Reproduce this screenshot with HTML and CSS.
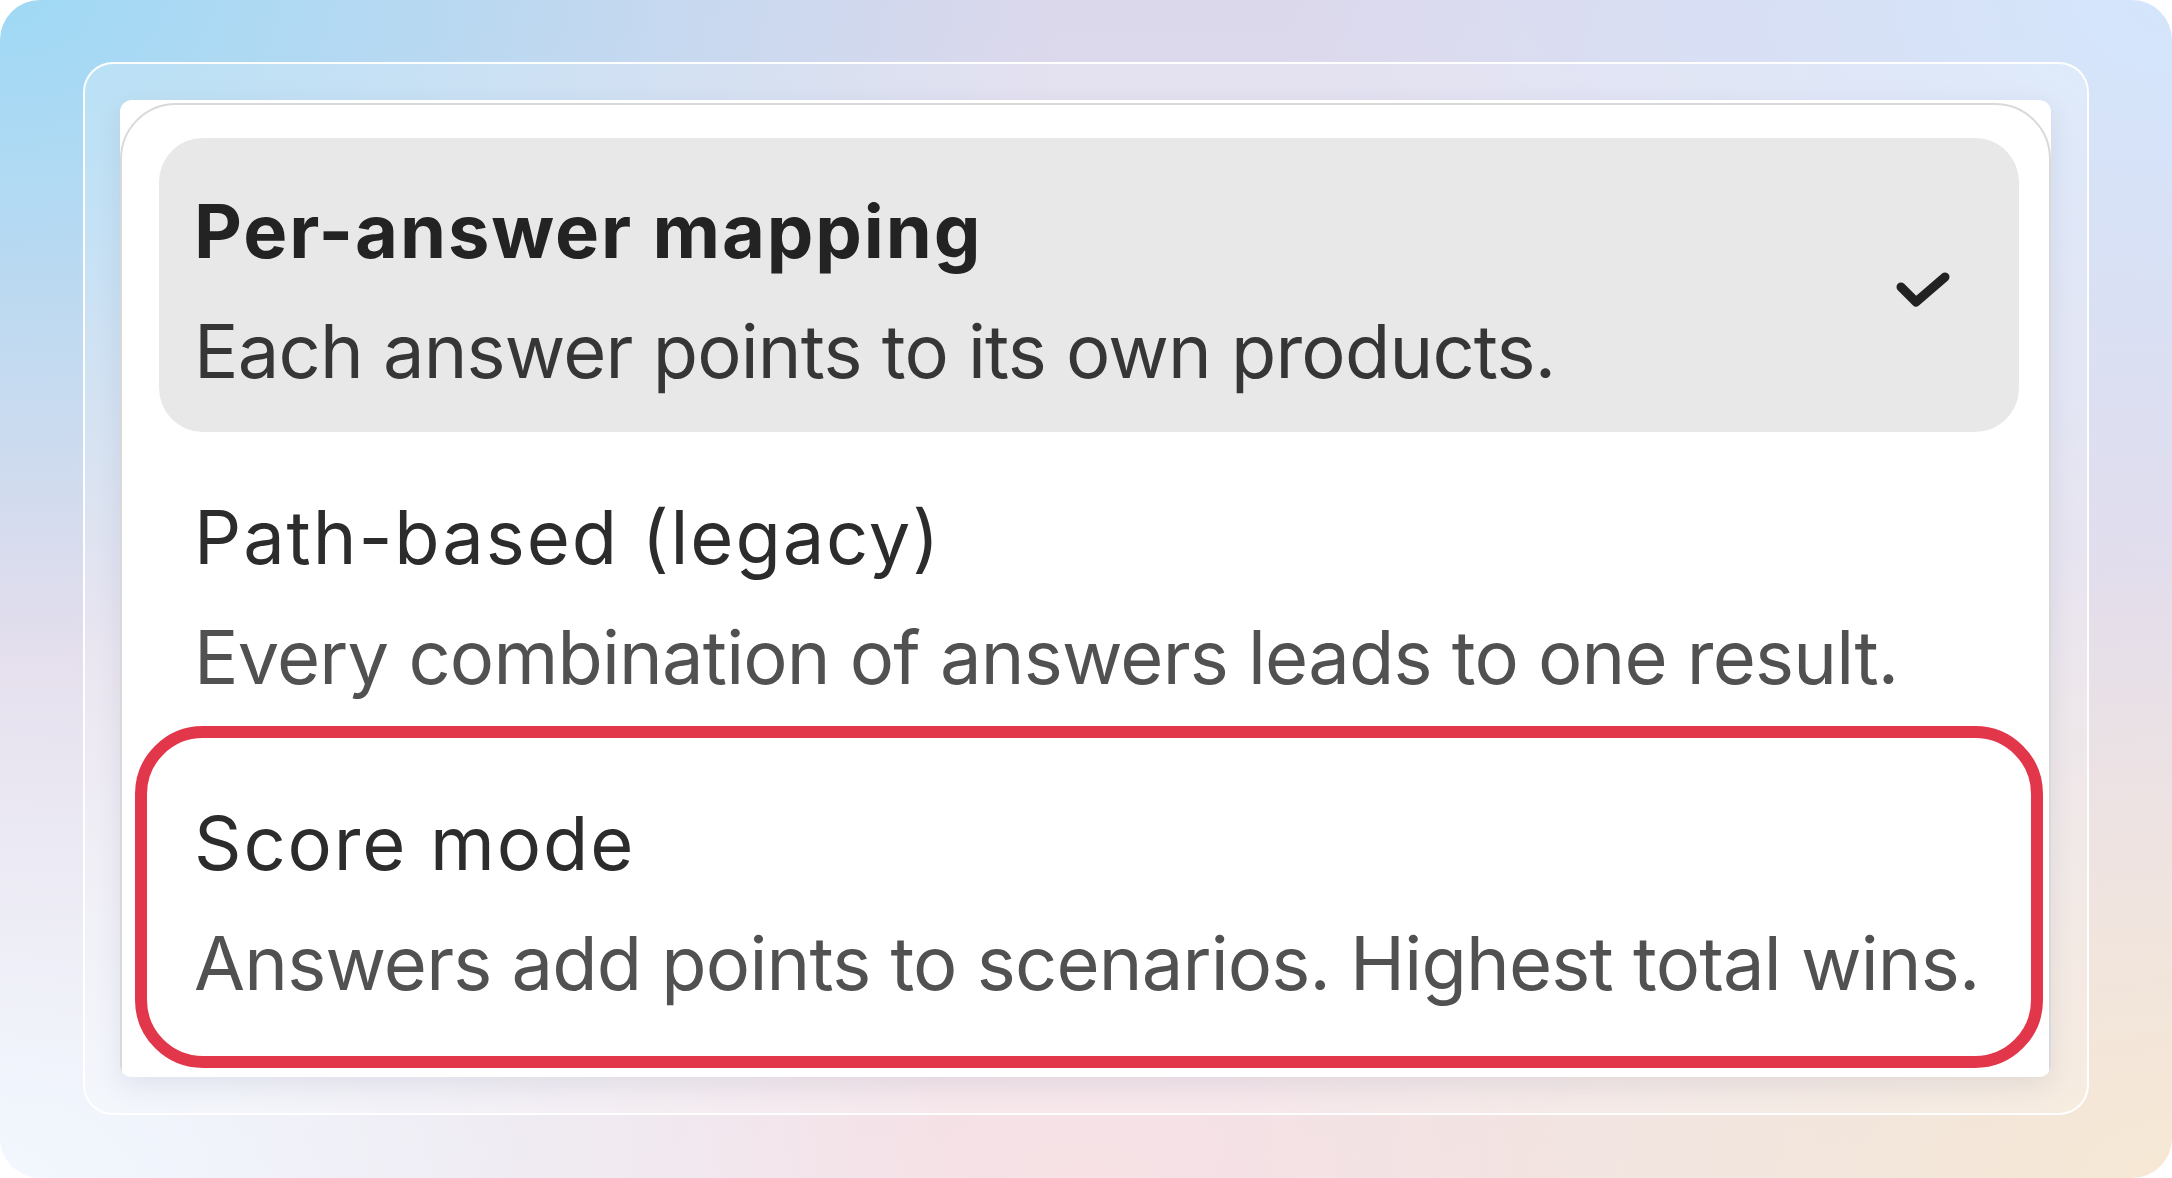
FILE: index.html
```html
<!DOCTYPE html>
<html lang="en">
<head>
<meta charset="utf-8">
<title>Mode picker</title>
<link rel="stylesheet" href="styles.css">
</head>
<body>
<div class="bg">
  <div class="frame">
    <div class="card">
      <div class="popover">
        <div class="item selected">
          <div class="text">
            <div class="title">Per-answer mapping</div>
            <div class="desc">Each answer points to its own products.</div>
          </div>
          <svg class="check" viewBox="0 0 56 44" width="56" height="44" aria-hidden="true">
            <path d="M6 18 L21 33 L50 8" fill="none" stroke="#222" stroke-width="9" stroke-linecap="round" stroke-linejoin="round"/>
          </svg>
        </div>
        <div class="item">
          <div class="text">
            <div class="title">Path-based (legacy)</div>
            <div class="desc">Every combination of answers leads to one result.</div>
          </div>
        </div>
        <div class="item highlighted">
          <div class="text">
            <div class="title">Score mode</div>
            <div class="desc">Answers add points to scenarios. Highest total wins.</div>
          </div>
        </div>
      </div>
    </div>
  </div>
</div>
</body>
</html>
```
FILE: styles.css
```css
html, body {
  margin: 0;
  padding: 0;
  background: #ffffff;
}
body {
  width: 2172px;
  height: 1178px;
  overflow: hidden;
  font-family: Inter, "Noto Sans", "DejaVu Sans", sans-serif;
}
.bg {
  box-sizing: border-box;
  width: 2172px;
  height: 1178px;
  border-radius: 40px;
  padding: 62px 83px 63px 83px;
  background:
    radial-gradient(ellipse 70% 80% at 0% 0%, #9fd9f5 0%, rgba(159,217,245,0) 70%),
    radial-gradient(ellipse 60% 70% at 100% 100%, #f6e8d4 0%, rgba(246,232,212,0) 75%),
    radial-gradient(ellipse 55% 60% at 0% 100%, #f2f8ff 0%, rgba(242,248,255,0) 80%),
    radial-gradient(ellipse 55% 70% at 100% 0%, #d4e6fc 0%, rgba(212,230,252,0) 75%),
    radial-gradient(ellipse 50% 50% at 50% 100%, #f7e1e5 0%, rgba(247,225,229,0) 80%),
    linear-gradient(180deg, #dcd8ec 0%, #ebe2ec 100%);
}
.frame {
  box-sizing: border-box;
  width: 2006px;
  height: 1053px;
  border-radius: 30px;
  border: 2px solid rgba(255,255,255,0.95);
  background: rgba(255,255,255,0.22);
  padding: 36px 36px 36px 35px;
}
.card {
  width: 100%;
  height: 100%;
  background: #ffffff;
  border-radius: 12px;
  overflow: hidden;
  box-shadow: 0 8px 26px rgba(60,70,110,0.10);
}
.popover {
  box-sizing: border-box;
  margin-top: 3px;
  height: 1100px;
  border: 2px solid #d9d9d9;
  border-radius: 56px;
  padding: 33px 30px 0 37px;
  display: flex;
  flex-direction: column;
  gap: 12px;
}
.item {
  box-sizing: border-box;
  height: 294px;
  border-radius: 44px;
  padding: 33px 68px 21px 35px;
  display: flex;
  align-items: center;
  justify-content: space-between;
}
.item .text {
  align-self: flex-start;
}
.title {
  font-size: 74px;
  line-height: 120px;
  color: #2c2c2c;
  font-weight: 400;
  letter-spacing: 1.9px;
  white-space: nowrap;
}
.desc {
  font-size: 74px;
  line-height: 120px;
  color: #515151;
  letter-spacing: -0.8px;
  white-space: nowrap;
}
.selected {
  background: #e8e8e8;
}
.selected .title {
  font-weight: 700;
  color: #232323;
}
.selected .desc {
  color: #363636;
}
.check {
  display: block;
  flex: none;
}
.highlighted {
  outline: 12px solid #e2374b;
  outline-offset: 12px;
}
```
